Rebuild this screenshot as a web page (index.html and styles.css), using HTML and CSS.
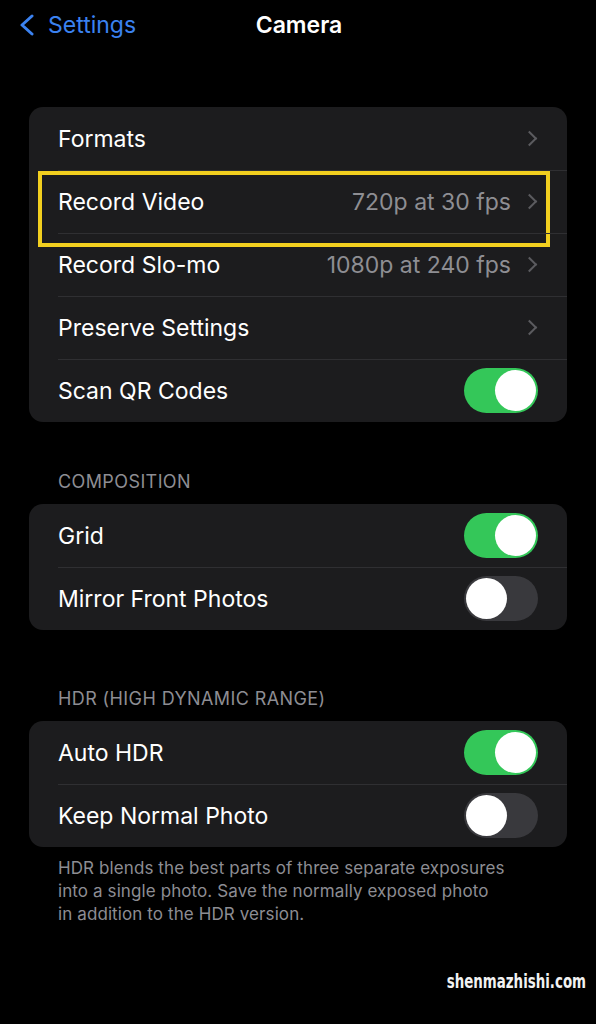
FILE: index.html
```html
<!DOCTYPE html>
<html lang="en">
<head>
  <meta charset="UTF-8" />
  <meta name="viewport" content="width=device-width, initial-scale=1.0"/>
  <title>Camera</title>
  <link rel="stylesheet" href="styles.css">
</head>
<body>
  <div class="nav">
    <div class="back">
      <svg class="back-icon" width="18" height="22" viewBox="0 0 18 22">
        <path d="M14 2 L4 11 L14 20" fill="none" stroke="#3b82f0" stroke-width="3" stroke-linecap="round" stroke-linejoin="round"/>
      </svg>
      <span>Settings</span>
    </div>
    <div class="title">Camera</div>
  </div>

  <div class="group first">
    <div class="row">
      <span class="label">Formats</span>
      <span class="chev"></span>
    </div>
    <div class="row">
      <span class="label">Record Video</span>
      <span class="value">720p at 30 fps</span>
      <span class="chev"></span>
      <div class="highlight"></div>
    </div>
    <div class="row">
      <span class="label">Record Slo-mo</span>
      <span class="value">1080p at 240 fps</span>
      <span class="chev"></span>
    </div>
    <div class="row">
      <span class="label">Preserve Settings</span>
      <span class="chev"></span>
    </div>
    <div class="row">
      <span class="label">Scan QR Codes</span>
      <span class="toggle on"></span>
    </div>
  </div>

  <div class="section-title">COMPOSITION</div>
  <div class="group">
    <div class="row">
      <span class="label">Grid</span>
      <span class="toggle on"></span>
    </div>
    <div class="row">
      <span class="label">Mirror Front Photos</span>
      <span class="toggle"></span>
    </div>
  </div>

  <div class="section-title hdr">HDR (HIGH DYNAMIC RANGE)</div>
  <div class="group">
    <div class="row">
      <span class="label">Auto HDR</span>
      <span class="toggle on"></span>
    </div>
    <div class="row">
      <span class="label">Keep Normal Photo</span>
      <span class="toggle"></span>
    </div>
  </div>
  <p class="footer">HDR blends the best parts of three separate exposures<br>into a single photo. Save the normally exposed photo<br>in addition to the HDR version.</p>

  <div class="watermark">shenmazhishi.com</div>
</body>
</html>
```

FILE: styles.css
```css
* {
  margin: 0;
  padding: 0;
  box-sizing: border-box;
}
body {
  font-family: Inter, "Noto Sans", sans-serif;
  background-color: #000;
  color: #fff;
  width: 596px;
  height: 1024px;
  overflow: hidden;
  position: relative;
}
.nav {
  height: 50px;
  position: relative;
  display: flex;
  align-items: center;
  justify-content: center;
}
.back {
  position: absolute;
  left: 18px;
  top: 11px;
  display: flex;
  align-items: center;
  gap: 12px;
  color: #3b82f0;
  font-size: 23px;
}
.back-icon {
  display: block;
}
.title {
  font-size: 23px;
  font-weight: 600;
  margin-left: 2px;
}
.group {
  margin: 0 29px;
  background: #1c1c1e;
  border-radius: 14px;
}
.group.first {
  margin-top: 57px;
}
.row {
  height: 63px;
  display: flex;
  align-items: center;
  padding: 0 29px;
  position: relative;
  font-size: 23px;
}
.row + .row::before {
  content: "";
  position: absolute;
  left: 29px;
  right: 0;
  top: 0;
  height: 1px;
  background: #2f2f32;
}
.label {
  flex: 1;
}
.value {
  color: #8e8e93;
  margin-right: 13px;
}
.chev {
  width: 11px;
  height: 11px;
  border-top: 2.5px solid #5b5b5f;
  border-right: 2.5px solid #5b5b5f;
  transform: rotate(45deg);
  margin-right: 3px;
}
.highlight {
  position: absolute;
  left: 9px;
  right: 17px;
  top: 1px;
  bottom: -14px;
  border: 4px solid #f2cf1f;
}
.toggle {
  width: 74px;
  height: 45px;
  border-radius: 23px;
  background: #39393d;
  position: relative;
}
.toggle::after {
  content: "";
  position: absolute;
  top: 2px;
  left: 2px;
  width: 41px;
  height: 41px;
  border-radius: 50%;
  background: #fff;
}
.toggle.on {
  background: #34c759;
}
.toggle.on::after {
  left: 31px;
}
.section-title {
  color: #8d8d93;
  font-size: 18px;
  letter-spacing: 0.4px;
  line-height: 20px;
  padding-left: 58px;
  margin: 50px 0 12px;
}
.section-title.hdr {
  margin-top: 59px;
}
.footer {
  color: #8d8d93;
  font-size: 17px;
  letter-spacing: 0.1px;
  line-height: 23px;
  padding: 10px 0 0 58px;
}
.watermark {
  position: absolute;
  right: 10px;
  bottom: 31px;
  font-family: "DejaVu Sans", sans-serif;
  font-weight: bold;
  font-size: 20px;
  color: #f2f2f2;
  transform: scaleX(0.67);
  transform-origin: right center;
}
```
